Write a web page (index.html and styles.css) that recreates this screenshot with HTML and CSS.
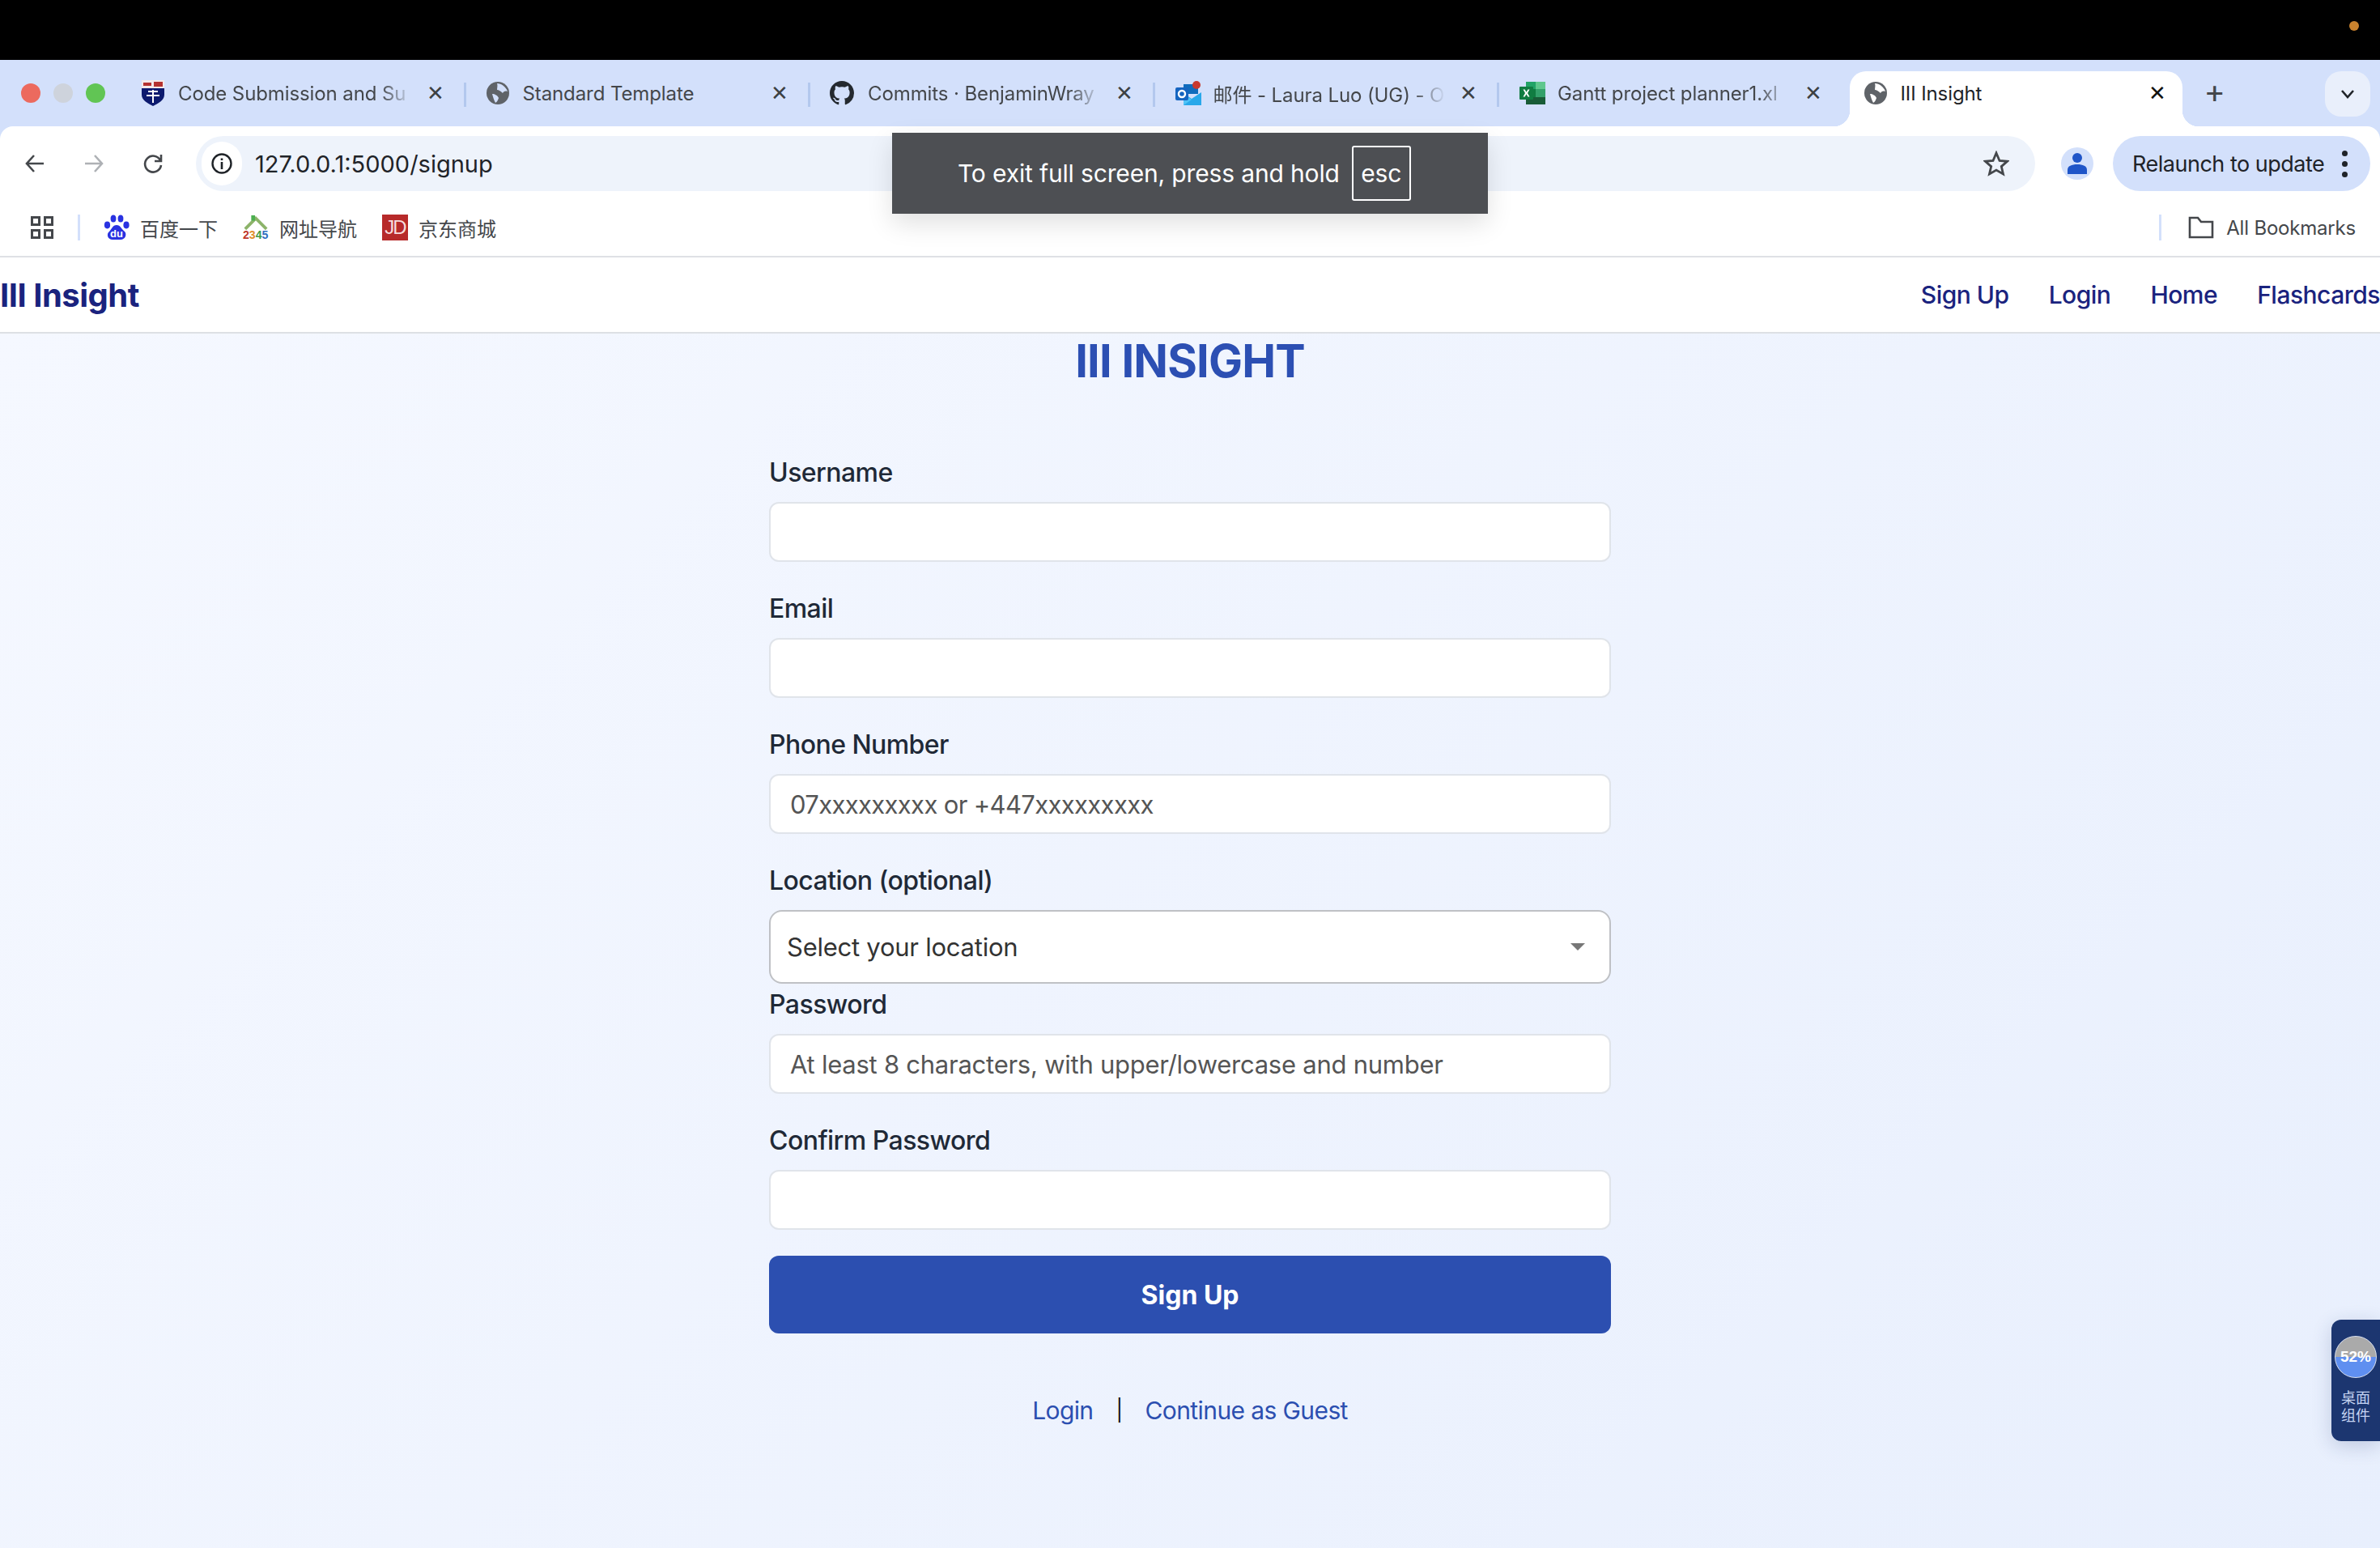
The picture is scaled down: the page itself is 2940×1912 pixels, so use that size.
FILE: index.html
```html
<!DOCTYPE html>
<html lang="en">
<head>
    <meta charset="UTF-8">
    <meta name="viewport" content="width=device-width, initial-scale=1.0">
    <title>III Insight</title>
    <link rel="stylesheet" href="styles.css">
</head>
<body>
    <div class="menubar"><span class="menubar-dot"></span></div>

    <div class="tabstrip">
        <div class="lights">
            <span class="light light-red"></span>
            <span class="light light-grey"></span>
            <span class="light light-green"></span>
        </div>
        <div class="tab">
            <svg class="favicon favicon-shield" viewBox="0 0 28 32">
                <path d="M0 0H28V18C28 25 20 29 14 32C8 29 0 25 0 18Z" fill="#0c1a6e"/>
                <path d="M0 0H28V10H0Z" fill="#f3e9e9"/>
                <path d="M2 3H12V7H2ZM15 2H26V8H15Z" fill="#b5322f"/>
                <path d="M13 12H15V28H13ZM6 18H22V20H6ZM8 13H20V15H8Z" fill="#fff"/>
            </svg>
            <span class="tab-title">Code Submission and Su</span>
            <span class="tab-close">✕</span>
        </div>
        <div class="tab">
            <svg class="favicon" viewBox="0 0 28 28">
                <circle cx="14" cy="14" r="14" fill="#5f6368"/>
                <path d="M13 2C18 2 24 6 26 12C23 11 21 12 20 14C18 12 15 10 13 10C13 7 14 5 13 2ZM7 15C10 15 14 17 15 20C14 23 13 25 11 26C9 22 8 19 7 15Z" fill="#d3e0fb"/>
            </svg>
            <span class="tab-title tab-title-full">Standard Template</span>
            <span class="tab-close">✕</span>
        </div>
        <div class="tab">
            <svg class="favicon favicon-github" viewBox="0 0 16 16">
                <path fill="#24292f" d="M8 0C3.58 0 0 3.58 0 8c0 3.54 2.29 6.53 5.47 7.59.4.07.55-.17.55-.38 0-.19-.01-.82-.01-1.49-2.01.37-2.53-.49-2.69-.94-.09-.23-.48-.94-.82-1.13-.28-.15-.68-.52-.01-.53.63-.01 1.08.58 1.23.82.72 1.21 1.87.87 2.33.66.07-.52.28-.87.51-1.07-1.78-.2-3.64-.89-3.64-3.95 0-.87.31-1.59.82-2.15-.08-.2-.36-1.02.08-2.12 0 0 .67-.21 2.2.82.64-.18 1.32-.27 2-.27.68 0 1.36.09 2 .27 1.53-1.04 2.2-.82 2.2-.82.44 1.1.16 1.92.08 2.12.51.56.82 1.27.82 2.15 0 3.07-1.87 3.75-3.65 3.95.29.25.54.73.54 1.48 0 1.07-.01 1.93-.01 2.2 0 .21.15.46.55.38A8.013 8.013 0 0016 8c0-4.42-3.58-8-8-8z"/>
            </svg>
            <span class="tab-title">Commits · BenjaminWray</span>
            <span class="tab-close">✕</span>
        </div>
        <div class="tab">
            <svg class="favicon favicon-wide" viewBox="0 0 32 30">
                <path d="M10 4H28V16H10Z" fill="#0f6cbd"/>
                <path d="M10 15L20 22L32 14V30H10Z" fill="#28a8ea"/>
                <path d="M10 16L20 23L10 30Z" fill="#4fc3f7"/>
                <rect x="0" y="8" width="16" height="16" rx="2" fill="#1565c0"/>
                <circle cx="8" cy="16" r="4" fill="none" stroke="#fff" stroke-width="2.4"/>
                <circle cx="26" cy="5" r="5" fill="#c8392f"/>
            </svg>
            <span class="tab-title">邮件 - Laura Luo (UG) - O</span>
            <span class="tab-close">✕</span>
        </div>
        <div class="tab tab-plain">
            <svg class="favicon favicon-wide" viewBox="0 0 32 28">
                <path d="M8 0H20V9H8Z" fill="#21a366"/>
                <path d="M20 0H32V9H20Z" fill="#5fc78d"/>
                <path d="M8 9H20V19H8Z" fill="#107c41"/>
                <path d="M20 9H32V19H20Z" fill="#33a06a"/>
                <path d="M8 19H32V28H8Z" fill="#185c37"/>
                <rect x="0" y="6" width="17" height="16" rx="1" fill="#107c41"/>
                <path d="M4.5 9.5L7 14L4.5 18.5H6.6L8.5 15.2L10.4 18.5H12.5L10 14L12.5 9.5H10.4L8.5 12.8L6.6 9.5Z" fill="#fff"/>
            </svg>
            <span class="tab-title">Gantt project planner1.xl</span>
            <span class="tab-close">✕</span>
        </div>
        <div class="tab tab-active">
            <svg class="favicon" viewBox="0 0 28 28">
                <circle cx="14" cy="14" r="14" fill="#5f6368"/>
                <path d="M13 2C18 2 24 6 26 12C23 11 21 12 20 14C18 12 15 10 13 10C13 7 14 5 13 2ZM7 15C10 15 14 17 15 20C14 23 13 25 11 26C9 22 8 19 7 15Z" fill="#fff"/>
            </svg>
            <span class="tab-title">III Insight</span>
            <span class="tab-close">✕</span>
        </div>
        <span class="new-tab">+</span>
        <span class="tab-search">
            <svg width="18" height="12" viewBox="0 0 18 12"><path d="M2 2L9 10L16 2" fill="none" stroke="#1f2328" stroke-width="2.6"/></svg>
        </span>
    </div>

    <div class="toolbar">
        <svg class="tool-icon" viewBox="0 0 28 28"><path d="M25 14H5M13 4L4 14L13 24" fill="none" stroke="#44474b" stroke-width="2.6"/></svg>
        <svg class="tool-icon" viewBox="0 0 28 28"><path d="M3 14H23M15 4L24 14L15 24" fill="none" stroke="#aeb1b5" stroke-width="2.6"/></svg>
        <svg class="tool-icon" viewBox="0 0 28 28"><path d="M23 10A10 10 0 1 0 24 16M24 3V11H16" fill="none" stroke="#44474b" stroke-width="2.6"/></svg>
        <div class="address">
            <span class="site-info">
                <svg width="26" height="26" viewBox="0 0 26 26">
                    <circle cx="13" cy="13" r="11.5" fill="none" stroke="#1f2328" stroke-width="2.4"/>
                    <path d="M11.7 11H14.3V20H11.7ZM11.7 6.5H14.3V9H11.7Z" fill="#1f2328"/>
                </svg>
            </span>
            <span class="url">127.0.0.1:5000/signup</span>
            <svg class="star" viewBox="0 0 32 32"><path d="M16 3L20 12.5L29.5 13.3L22.3 19.6L24.5 29L16 24L7.5 29L9.7 19.6L2.5 13.3L12 12.5Z" fill="none" stroke="#44474b" stroke-width="2.8"/></svg>
        </div>
        <span class="avatar">
            <svg width="26" height="28" viewBox="0 0 26 28">
                <circle cx="13" cy="7" r="6" fill="#1f55c8"/>
                <path d="M1 27V22C1 17 6 15 13 15C20 15 25 17 25 22V27Z" fill="#1f55c8"/>
            </svg>
        </span>
        <div class="relaunch">
            <span>Relaunch to update</span>
            <span class="kebab"><i></i><i></i><i></i></span>
        </div>
    </div>

    <div class="bookmarks">
        <span class="apps"><i></i><i></i><i></i><i></i></span>
        <span class="bm-sep"></span>
        <a class="bookmark">
            <svg class="bm-icon" viewBox="0 0 32 32">
                <g fill="#2932e1">
                    <ellipse cx="4.5" cy="13" rx="3.6" ry="4.4"/>
                    <ellipse cx="12" cy="5" rx="3.4" ry="4.6"/>
                    <ellipse cx="21" cy="5" rx="3.4" ry="4.6"/>
                    <ellipse cx="28" cy="13" rx="3.6" ry="4.4"/>
                    <path d="M16 13C21 13 22 18 26 21C29 24 27 31 21 31H11C5 31 3 24 7 21C10 18 11 13 16 13Z"/>
                </g>
                <text class="bm-du" x="16" y="28">du</text>
            </svg>
            百度一下
        </a>
        <a class="bookmark">
            <svg class="bm-icon" viewBox="0 0 34 32">
                <path d="M3 18L17 4L31 18" fill="none" stroke="#8cb369" stroke-width="4"/>
                <path d="M11 0H16V7H11Z" fill="#4caf50"/>
                <text class="bm-2345" y="31"><tspan x="0" fill="#c0392b">2</tspan><tspan fill="#e08e2b">3</tspan><tspan fill="#3f9b45">4</tspan><tspan fill="#2f6fc1">5</tspan></text>
            </svg>
            网址导航
        </a>
        <a class="bookmark">
            <span class="jd">JD</span>
            京东商城
        </a>
        <span class="bm-sep bm-sep-right"></span>
        <a class="bookmark bookmark-all">
            <svg class="bm-folder" viewBox="0 0 32 28"><path d="M2 2H12L16 7H30V26H2Z" fill="none" stroke="#44474b" stroke-width="2.6"/></svg>
            All Bookmarks
        </a>
    </div>

    <div class="fullscreen-toast">
        <span>To exit full screen, press and hold</span>
        <span class="esc">esc</span>
    </div>

    <nav class="navbar">
        <a class="brand">III Insight</a>
        <ul class="nav-links">
            <li><a>Sign Up</a></li>
            <li><a>Login</a></li>
            <li><a>Home</a></li>
            <li><a>Flashcards</a></li>
        </ul>
    </nav>

    <main class="page">
        <h1 class="page-title">III INSIGHT</h1>
        <form class="signup-form">
            <div class="field">
                <label for="username">Username</label>
                <input type="text" id="username">
            </div>
            <div class="field">
                <label for="email">Email</label>
                <input type="email" id="email">
            </div>
            <div class="field">
                <label for="phone">Phone Number</label>
                <input class="input-phone" type="text" id="phone" placeholder="07xxxxxxxxx or +447xxxxxxxxx">
            </div>
            <div class="field field-select">
                <label for="location">Location (optional)</label>
                <div class="select-wrap">
                    <select id="location">
                        <option>Select your location</option>
                    </select>
                </div>
            </div>
            <div class="field">
                <label for="password">Password</label>
                <input type="password" id="password" placeholder="At least 8 characters, with upper/lowercase and number">
            </div>
            <div class="field">
                <label for="confirm">Confirm Password</label>
                <input type="password" id="confirm">
            </div>
            <button type="submit">Sign Up</button>
        </form>
        <div class="alt-links">
            <a>Login</a>
            <span>|</span>
            <a>Continue as Guest</a>
        </div>
    </main>

    <div class="desk-widget">
        <div class="gauge">52%</div>
        <div class="widget-label">桌面<br>组件</div>
    </div>
</body>
</html>
```
FILE: styles.css
```css
* {
    box-sizing: border-box;
}
html, body {
    height: 100%;
}
body {
    margin: 0;
    display: flex;
    flex-direction: column;
    position: relative;
    overflow: hidden;
    font-family: Inter, "Noto Sans CJK SC", sans-serif;
    color: #1f2937;
    background-color: #d3e0fb;
}
a {
    text-decoration: none;
}

/* browser chrome */
.menubar {
    height: 74px;
    background-color: #000;
    display: flex;
    justify-content: flex-end;
    padding: 26px 26px 0 0;
}
.menubar-dot {
    width: 12px;
    height: 12px;
    border-radius: 50%;
    background-color: #c9822e;
}
.tabstrip {
    height: 82px;
    background-color: #d3e0fb;
    display: flex;
    padding-top: 14px;
}
.lights {
    width: 150px;
    display: flex;
    gap: 16px;
    padding: 15px 0 0 26px;
}
.light {
    width: 24px;
    height: 24px;
    border-radius: 50%;
}
.light-red { background-color: #ec6a5e; }
.light-grey { background-color: #ced3dc; }
.light-green { background-color: #61c554; }
.tab {
    width: 425.5px;
    height: 54px;
    flex-shrink: 0;
    display: flex;
    align-items: center;
    padding: 0 26px 0 25px;
    font-size: 24px;
    letter-spacing: -0.1px;
    color: #44474b;
    position: relative;
}
.tab::before {
    content: "";
    position: absolute;
    right: 0;
    top: 14px;
    height: 30px;
    width: 3px;
    background-color: #b3c8ee;
}
.tab-plain::before {
    display: none;
}
.favicon {
    width: 28px;
    height: 30px;
    margin-right: 17px;
    flex-shrink: 0;
}
.favicon-shield {
    height: 32px;
}
.favicon-github {
    width: 30px;
    margin-left: -1px;
}
.favicon-wide {
    width: 32px;
    margin-right: 15px;
}
.tab-title {
    flex: 1;
    min-width: 0;
    white-space: nowrap;
    overflow: hidden;
    margin-right: 16px;
    -webkit-mask-image: linear-gradient(90deg, #000 86%, transparent 100%);
    mask-image: linear-gradient(90deg, #000 86%, transparent 100%);
}
.tab-title-full {
    -webkit-mask-image: none;
    mask-image: none;
}
.tab-close {
    width: 24px;
    text-align: center;
    font-size: 26px;
    line-height: 30px;
    color: #3c4043;
}
.tab-active {
    width: 411px;
    height: 68px;
    margin: 0 7px;
    padding: 0 19px 14px 18px;
    background-color: #fff;
    border-radius: 20px 20px 0 0;
    color: #1f2328;
}
.tab-active::before {
    left: -20px;
    right: auto;
    top: auto;
    bottom: 0;
    width: 20px;
    height: 20px;
    background: radial-gradient(circle at 0 0, #d3e0fb 20px, #fff 20.5px);
}
.tab-active::after {
    content: "";
    position: absolute;
    right: -20px;
    bottom: 0;
    width: 20px;
    height: 20px;
    background: radial-gradient(circle at 100% 0, #d3e0fb 20px, #fff 20.5px);
}
.tab-active .tab-title {
    -webkit-mask-image: none;
    mask-image: none;
}
.tab-active .tab-close {
    color: #111;
}
.new-tab {
    margin-left: 20px;
    font-size: 40px;
    line-height: 50px;
    color: #44474b;
}
.tab-search {
    margin-left: auto;
    margin-right: 12px;
    width: 56px;
    height: 56px;
    border-radius: 20px;
    background-color: #e9effb;
    display: flex;
    align-items: center;
    justify-content: center;
}
.toolbar {
    height: 92px;
    background-color: #fff;
    border-radius: 16px 16px 0 0;
    display: flex;
    align-items: flex-start;
    padding: 12px 12px 0 0;
    position: relative;
}
.tool-icon {
    width: 28px;
    height: 28px;
    margin: 20px 0 0 29px;
    flex-shrink: 0;
}
.tool-icon + .tool-icon {
    margin-left: 45px;
}
.address {
    width: 2273px;
    height: 68px;
    margin-left: 39px;
    border-radius: 34px;
    background-color: #eef3fb;
    display: flex;
    align-items: center;
    padding-left: 7px;
}
.site-info {
    width: 50px;
    height: 54px;
    border-radius: 27px;
    background-color: #fff;
    display: flex;
    align-items: center;
    justify-content: center;
}
.url {
    margin-left: 16px;
    font-size: 29px;
    color: #1f2328;
}
.star {
    width: 32px;
    height: 32px;
    margin-left: auto;
    margin-right: 32px;
}
.avatar {
    width: 40px;
    height: 40px;
    margin: 14px 0 0 32px;
    border-radius: 50%;
    background-color: #d3e0fb;
    display: flex;
    align-items: flex-end;
    justify-content: center;
    padding-bottom: 6px;
}
.relaunch {
    width: 318px;
    height: 68px;
    margin-left: 24px;
    border-radius: 34px;
    background-color: #d3e0fb;
    display: flex;
    align-items: center;
    padding-left: 24px;
    font-size: 27px;
    letter-spacing: -0.5px;
    color: #1f2328;
}
.kebab {
    display: flex;
    flex-direction: column;
    gap: 6px;
    margin-left: 22px;
}
.kebab i {
    width: 7px;
    height: 7px;
    border-radius: 50%;
    background-color: #1f2328;
}
.bookmarks {
    height: 70px;
    background-color: #fff;
    border-bottom: 2px solid #dfe1e5;
    display: flex;
    align-items: center;
    padding: 0 30px 2px 38px;
    font-size: 24px;
    color: #44474b;
}
.apps {
    width: 28px;
    height: 28px;
    display: grid;
    grid-template-columns: 12px 12px;
    grid-template-rows: 12px 12px;
    gap: 4px;
}
.apps i {
    border: 3px solid #44474b;
}
.bm-sep {
    width: 3px;
    height: 32px;
    margin: 0 29px 0 30px;
    background-color: #d3e0fb;
}
.bookmark {
    display: flex;
    align-items: center;
    gap: 13px;
    margin-right: 31px;
    white-space: nowrap;
}
.bm-icon {
    width: 32px;
    height: 32px;
}
.bm-du {
    font-family: "Liberation Sans", sans-serif;
    font-size: 13px;
    font-weight: 700;
    fill: #fff;
    text-anchor: middle;
}
.bm-2345 {
    font-family: "Liberation Sans", sans-serif;
    font-size: 15px;
    font-weight: 700;
}
.jd {
    width: 32px;
    height: 32px;
    background-color: #b72a2a;
    color: #f6dcdc;
    font-family: "Liberation Sans", sans-serif;
    font-size: 24px;
    letter-spacing: -2px;
    line-height: 32px;
    text-align: center;
}
.bm-sep-right {
    margin-left: auto;
    margin-right: 33px;
}
.bookmark-all {
    margin-right: 0;
    gap: 15px;
    letter-spacing: -0.2px;
}
.bm-folder {
    width: 32px;
    height: 28px;
}
.fullscreen-toast {
    position: absolute;
    left: 1102px;
    top: 164px;
    width: 736px;
    height: 100px;
    background-color: #4d4f53;
    color: #fff;
    box-shadow: 0 12px 30px rgba(0, 0, 0, 0.12);
    display: flex;
    align-items: center;
    padding-left: 81px;
    font-size: 30px;
    letter-spacing: -0.15px;
    z-index: 5;
}
.esc {
    width: 73px;
    height: 68px;
    margin-left: 15px;
    border: 2px solid #fff;
    border-radius: 3px;
    display: flex;
    align-items: center;
    justify-content: center;
}

/* site */
.navbar {
    height: 94px;
    background-color: #fff;
    border-bottom: 2px solid #dde0e4;
    display: flex;
    align-items: center;
    justify-content: space-between;
    color: #1a237e;
    flex-shrink: 0;
}
.brand {
    font-size: 40px;
    font-weight: 700;
    letter-spacing: -0.5px;
}
.nav-links {
    list-style: none;
    display: flex;
    gap: 49px;
    margin: 0;
    padding: 0;
    font-size: 30px;
    letter-spacing: -0.5px;
    font-weight: 500;
}
.page {
    flex: 1;
    background: linear-gradient(135deg, #f5f8ff, #e8effd);
    display: flex;
    flex-direction: column;
    align-items: center;
}
.page-title {
    margin: 0;
    font-size: 56px;
    line-height: 68px;
    font-weight: 700;
    letter-spacing: -0.8px;
    color: #2c4fb3;
}
.signup-form {
    width: 1040px;
    margin-top: 80px;
}
.field {
    margin-bottom: 34px;
}
.field label {
    display: block;
    font-size: 32px;
    letter-spacing: -0.55px;
    line-height: 48px;
    font-weight: 500;
    margin-bottom: 12px;
    color: #1f2937;
}
.field input {
    display: block;
    width: 100%;
    height: 74px;
    padding: 0 24px;
    border: 2px solid #e0e4ea;
    border-radius: 12px;
    background-color: #fff;
    font-family: inherit;
    font-size: 31px;
    letter-spacing: -0.25px;
}
.field .input-phone {
    letter-spacing: -0.65px;
}
.field input::placeholder {
    color: #555;
    opacity: 1;
}
.field-select {
    margin-bottom: 2px;
}
.select-wrap {
    position: relative;
}
.select-wrap::after {
    content: "";
    position: absolute;
    right: 32px;
    top: 41px;
    border-left: 9px solid transparent;
    border-right: 9px solid transparent;
    border-top: 9px solid #777;
}
.select-wrap select {
    display: block;
    width: 100%;
    height: 91px;
    padding: 0 20px;
    border: 2px solid #bfc1c5;
    border-radius: 16px;
    background-color: #fff;
    font-family: inherit;
    font-size: 31px;
    letter-spacing: -0.25px;
    color: #333;
    appearance: none;
    -webkit-appearance: none;
}
.signup-form button {
    display: block;
    width: 100%;
    height: 96px;
    margin-top: -2px;
    border: none;
    border-radius: 12px;
    background-color: #2c4fb0;
    color: #fff;
    font-family: inherit;
    font-size: 32px;
    font-weight: 700;
}
.alt-links {
    margin-top: 71px;
    display: flex;
    gap: 28px;
    font-size: 30px;
    letter-spacing: -0.6px;
    line-height: 48px;
    color: #2c4fb0;
}
.alt-links span {
    color: #111;
    font-size: 26px;
}
.desk-widget {
    position: absolute;
    right: 0;
    top: 1630px;
    width: 60px;
    height: 150px;
    padding-top: 20px;
    background-color: #1c3670;
    border-radius: 12px 0 0 12px;
    box-shadow: 0 6px 24px rgba(28, 54, 112, 0.2);
    display: flex;
    flex-direction: column;
    align-items: center;
}
.gauge {
    width: 52px;
    height: 52px;
    border: 1px solid #d8dfee;
    border-radius: 50%;
    background: linear-gradient(#aaaaaa 50%, #5f8ff0 50%);
    color: #fff;
    font-family: "Liberation Sans", sans-serif;
    font-size: 19px;
    font-weight: 700;
    line-height: 50px;
    text-align: center;
}
.widget-label {
    margin-top: 14px;
    font-size: 18px;
    line-height: 22px;
    color: #c5d4f2;
    text-align: center;
}
```
